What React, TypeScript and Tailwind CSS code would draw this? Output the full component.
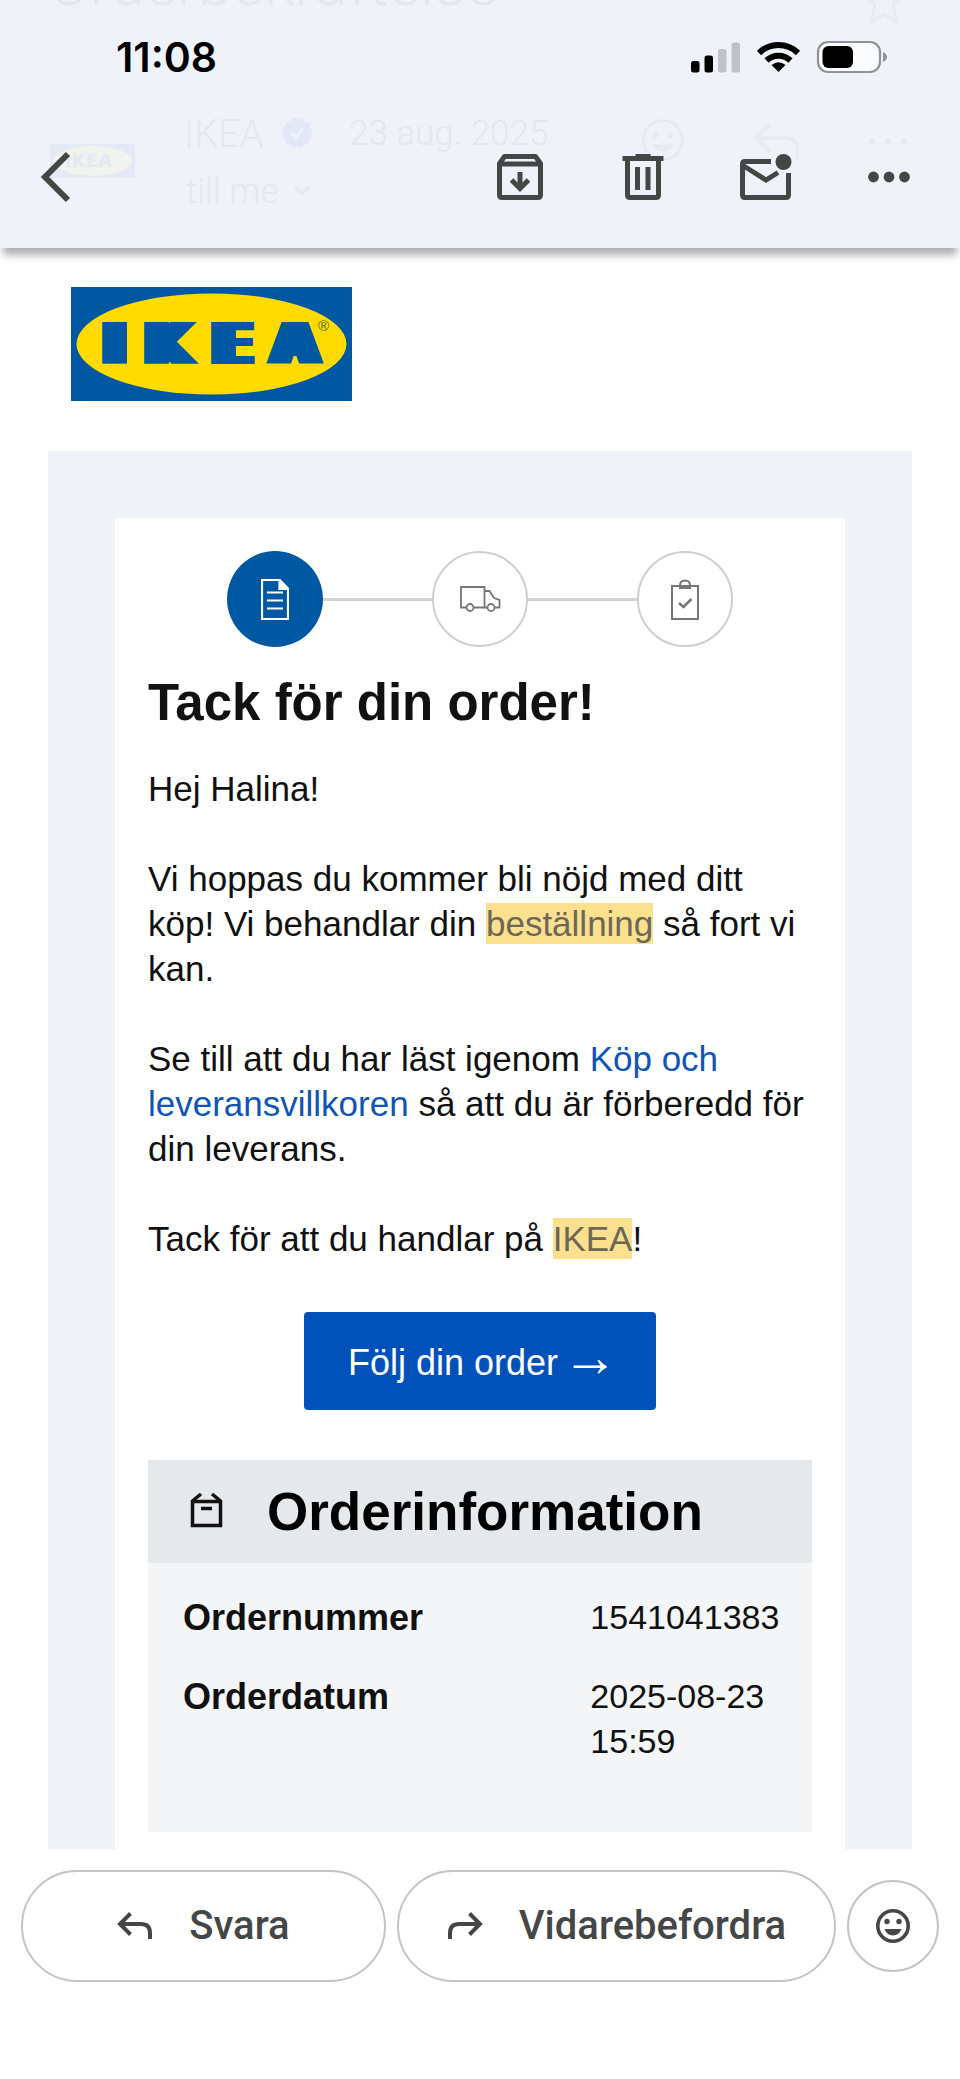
import React from "react";

function StatusIcons() {
  return (
    <svg width="196" height="34" viewBox="0 0 196 34" aria-hidden="true">
      <rect x="0" y="21" width="8.5" height="11.5" rx="2.5" fill="#000" />
      <rect x="13.5" y="15.5" width="8.5" height="17" rx="2.5" fill="#000" />
      <rect x="27" y="9" width="8.5" height="23.5" rx="2.5" fill="#bfc3c9" />
      <rect x="40.5" y="2.5" width="8.5" height="30" rx="2.5" fill="#bfc3c9" />
      <g fill="none" stroke="#000" strokeWidth="6">
        <path d="M68 13 A28 28 0 0 1 107 13" />
        <path d="M75.500 20.500 A17.500 17.500 0 0 1 99.500 20.500" />
      </g>
      <path d="M87.500 32 L80.500 25 Q87.500 19.500 94.500 25 Z" fill="#000" />
      <rect x="127" y="2" width="62" height="30" rx="10" fill="#fbfcfe" stroke="#8f9296" strokeWidth="2.2" />
      <rect x="131.500" y="6" width="30.500" height="22" rx="6" fill="#000" />
      <path d="M192 12 Q196 14 196 17 Q196 20 192 22 Z" fill="#8f9296" />
    </svg>
  );
}

function BackIcon() {
  return (
    <svg width="50" height="52" viewBox="0 0 50 52" fill="none" stroke="#444746" strokeWidth="6" aria-hidden="true">
      <path d="M38 3 L15 26 L38 49" />
    </svg>
  );
}

function ArchiveIcon() {
  return (
    <svg width="46" height="46" viewBox="0 0 46 46" fill="none" aria-hidden="true">
      <path d="M2.500 9.500 L7.500 2.500 H38.500 L43.500 9.500 V41 Q43.500 43.500 41 43.500 H5 Q2.500 43.500 2.500 41 Z" stroke="#444746" strokeWidth="5" strokeLinejoin="round" />
      <path d="M3 10 H43" stroke="#444746" strokeWidth="5" />
      <path d="M23 18 V34 M14.500 26 L23 34.500 L31.500 26" stroke="#444746" strokeWidth="5" />
    </svg>
  );
}

function TrashIcon() {
  return (
    <svg width="42" height="46" viewBox="0 0 42 46" fill="none" stroke="#444746" strokeWidth="5" aria-hidden="true">
      <path d="M0.500 4.500 H41.500" />
      <path d="M13.500 2.500 H28.500" />
      <path d="M5.500 5 V41 Q5.500 43.500 8 43.500 H34 Q36.500 43.500 36.500 41 V5" />
      <path d="M15.500 13 V36 M26 13 V36" />
    </svg>
  );
}

function UnreadIcon() {
  return (
    <svg width="52" height="48" viewBox="0 0 52 48" fill="none" stroke="#444746" strokeWidth="5" aria-hidden="true">
      <path d="M31 8.500 H5 Q2.500 8.500 2.500 11 V42 Q2.500 44.500 5 44.500 H46 Q48.500 44.500 48.500 42 V20" />
      <path d="M3 12.500 L26 27 L38 19.500" />
      <circle cx="43.500" cy="9" r="8" fill="#444746" stroke="none" />
    </svg>
  );
}

function MoreIcon() {
  return (
    <svg width="42" height="12" viewBox="0 0 42 12" fill="#444746" aria-hidden="true">
      <circle cx="5.500" cy="6" r="5.400" />
      <circle cx="21" cy="6" r="5.400" />
      <circle cx="36.500" cy="6" r="5.400" />
    </svg>
  );
}

function FadedSubject() {
  return (
    <div aria-hidden="true" className="pointer-events-none absolute inset-0 overflow-hidden font-[Roboto,sans-serif] font-light whitespace-nowrap text-[#e4e8ee]">
      <span className="absolute -top-12 left-12 text-[62px] leading-[64px]">Orderbekräftelse</span>
      <span className="absolute -top-9 left-[536px] text-[30px] leading-[40px]">Inkorg</span>
      <svg className="absolute top-0 left-[864px]" width="40" height="26" viewBox="0 0 40 26" fill="none" stroke="#e8ebf1" strokeWidth="3">
        <path d="M2 -6 L11 5 L7 22 L20 14 L33 22 L29 5 L38 -6" />
      </svg>
      <svg className="absolute top-[144px] left-[50px]" width="85" height="34" viewBox="0 0 85 34">
        <rect width="85" height="34" fill="#e3eaf5" />
        <ellipse cx="42.500" cy="17" rx="40" ry="15" fill="#f1f3ee" />
        <text x="15" y="23" fontFamily="DejaVu Sans" fontWeight="700" fontSize="18" fill="#e3eaf3">IKEA</text>
      </svg>
      <span className="absolute top-[114px] left-[184px] text-[38px] leading-[40px]">IKEA</span>
      <svg className="absolute top-[117px] left-[281px]" width="32" height="32" viewBox="0 0 32 32">
        <circle cx="16" cy="16" r="13" fill="#e2e8f8" stroke="#e2e8f8" strokeWidth="4" strokeDasharray="5 2" />
        <path d="M10 16 L14.500 20.500 L22 12" fill="none" stroke="#eff3f9" strokeWidth="3" />
      </svg>
      <span className="absolute top-[114px] left-[349px] text-[35px] leading-[40px]">23 aug. 2025</span>
      <span className="absolute top-[172px] left-[186px] text-[35px] leading-[40px]">till me</span>
      <svg className="absolute top-[184px] left-[293px]" width="18" height="14" viewBox="0 0 18 14" fill="none" stroke="#e5e9ef" strokeWidth="3">
        <path d="M2 3 L9 10 L16 3" />
      </svg>
      <svg className="absolute top-[118px] left-[641px]" width="44" height="44" viewBox="0 0 44 44" fill="none" stroke="#e7eaf0" strokeWidth="3">
        <circle cx="22" cy="22" r="19.500" />
        <circle cx="14.500" cy="17" r="1.500" />
        <circle cx="29.500" cy="17" r="1.500" />
        <path d="M14 28 H30 Q22 36 14 28 Z" />
      </svg>
      <svg className="absolute top-[122px] left-[752px]" width="48" height="40" viewBox="0 0 48 40" fill="none" stroke="#e8ebf1" strokeWidth="4">
        <path d="M18 3 L4 16 L18 29 M4 16 H34 Q45 16 45 28 V38" />
      </svg>
      <svg className="absolute top-[137px] left-[867px]" width="42" height="8" viewBox="0 0 42 8" fill="#e7eaf0">
        <circle cx="5" cy="4" r="3" />
        <circle cx="21" cy="4" r="3" />
        <circle cx="37" cy="4" r="3" />
      </svg>
    </div>
  );
}

function IkeaLogo() {
  return (
    <svg className="block" width="281" height="114" viewBox="0 0 281 114" role="img" aria-label="IKEA">
      <defs>
        <filter id="wordmark" x="-10%" y="-10%" width="120%" height="120%">
          <feMorphology operator="dilate" radius="7 0" />
        </filter>
      </defs>
      <rect width="281" height="114" fill="#0058a3" />
      <ellipse cx="140.500" cy="57" rx="135" ry="50.500" fill="#ffdb00" />
      <text x="33 75 142 202" y="77" fontFamily="DejaVu Sans" fontWeight="700" fontSize="57" fill="#0058a3" filter="url(#wordmark)">
        IKEA
      </text>
      <text x="247" y="44" fontFamily="Liberation Sans" fontSize="15" fill="#3f6a3c">®</text>
    </svg>
  );
}

function DocumentIcon() {
  return (
    <svg width="28" height="41" viewBox="0 0 28 41" fill="none" stroke="#fff" strokeWidth="2.200" aria-hidden="true">
      <path d="M1 1 H18.500 L27 9.500 V40 H1 Z" />
      <path d="M18.500 1 V10 H27 Z" fill="#fff" />
      <path d="M6 13.500 H22 M6 21.500 H22 M6 29.500 H22" />
    </svg>
  );
}

function TruckIcon() {
  return (
    <svg width="41" height="26" viewBox="0 0 41 26" fill="none" stroke="#767676" strokeWidth="1.800" aria-hidden="true">
      <path d="M6.500 21.500 H1 V1 H24.500 V21.500 H13.500" />
      <path d="M24.500 5 H29.500 L34 12 L39.500 14 V21.500 H35 M28 21.500 H24.500" />
      <circle cx="10" cy="21.500" r="3.500" />
      <circle cx="31" cy="21.500" r="3.500" />
    </svg>
  );
}

function ClipboardIcon() {
  return (
    <svg width="28" height="41" viewBox="0 0 28 41" fill="none" stroke="#767676" strokeWidth="2" aria-hidden="true">
      <path d="M1 7 H27 V40 H1 Z" />
      <path d="M9 9 V6.500 Q9 1.500 14 1.500 Q19 1.500 19 6.500 V9 Z" />
      <path d="M8 24 L12.500 28 L20.500 20" strokeWidth="2.500" />
    </svg>
  );
}

function BoxIcon() {
  return (
    <svg width="33" height="38" viewBox="0 0 33 38" fill="none" stroke="#111" strokeWidth="3.500" aria-hidden="true">
      <path d="M11 1 L2.500 8 V32.500 H30.500 V8 L22 1" />
      <path d="M2.500 8.500 H30.500" />
      <path d="M11 15.500 H22" />
    </svg>
  );
}

function ReplyIcon() {
  return (
    <svg width="36" height="28" viewBox="0 0 36 28" fill="none" stroke="#444746" strokeWidth="4" aria-hidden="true">
      <path d="M13.500 1.500 L3 12 L13.500 22.500 M3 12 H24 Q33 12 33 21 V27" />
    </svg>
  );
}

function ForwardIcon() {
  return (
    <svg width="36" height="28" viewBox="0 0 36 28" fill="none" stroke="#444746" strokeWidth="4" aria-hidden="true">
      <path d="M22.500 1.500 L33 12 L22.500 22.500 M33 12 H12 Q3 12 3 21 V27" />
    </svg>
  );
}

function SmileIcon() {
  return (
    <svg width="36" height="36" viewBox="0 0 36 36" aria-hidden="true">
      <circle cx="18" cy="18" r="15.200" fill="none" stroke="#444746" strokeWidth="3.600" />
      <circle cx="12" cy="13.500" r="2.700" fill="#444746" />
      <circle cx="24" cy="13.500" r="2.700" fill="#444746" />
      <path d="M9.500 21 H26.500 Q24 27.500 18 27.500 Q12 27.500 9.500 21 Z" fill="#444746" />
    </svg>
  );
}

const tools = [
  { label: "Arkivera", Icon: ArchiveIcon },
  { label: "Ta bort", Icon: TrashIcon },
  { label: "Markera som oläst", Icon: UnreadIcon },
  { label: "Mer", Icon: MoreIcon },
];

export default function App() {
  return (
    <div className="bg-white font-['Liberation_Sans',Arial,sans-serif] text-[#111]">
      <header className="relative z-10 bg-[#eff3f9] pb-2 shadow-[0_10px_8px_-3px_rgba(0,0,0,0.32)]">
        <FadedSubject />
        <div className="relative flex h-[114px] items-center justify-between pr-[73px] pl-[116px]">
          <span className="font-[Inter,sans-serif] text-[41px] leading-[48px] font-semibold text-black">11:08</span>
          <StatusIcons />
        </div>
        <div className="relative flex h-[126px] items-center justify-between pr-[10px] pl-[30px]">
          <button type="button" aria-label="Tillbaka">
            <BackIcon />
          </button>
          <div className="flex">
            {tools.map(({ label, Icon }) => (
              <button key={label} type="button" aria-label={label} className="flex h-16 w-[123px] items-center justify-center">
                <Icon />
              </button>
            ))}
          </div>
        </div>
      </header>

      <main>
        <div className="px-[71px] pt-[39px] pb-[50px]">
          <IkeaLogo />
        </div>

        <div className="mx-12 bg-[#eff3f7] px-[67px] pt-[67px]">
          <article className="bg-white px-[33px] pt-[33px] pb-[17px]">
            <div className="flex items-center px-[79px]">
              <div className="flex size-24 items-center justify-center rounded-full bg-[#0058a3]">
                <DocumentIcon />
              </div>
              <div className="h-[3px] flex-1 bg-[#d2d2d2]" />
              <div className="flex size-24 items-center justify-center rounded-full border-2 border-[#cfcfcf]">
                <TruckIcon />
              </div>
              <div className="h-[3px] flex-1 bg-[#d2d2d2]" />
              <div className="flex size-24 items-center justify-center rounded-full border-2 border-[#cfcfcf]">
                <ClipboardIcon />
              </div>
            </div>

            <h1 className="mt-[26px] text-[51px] leading-[60px] font-bold">Tack för din order!</h1>

            <div className="mt-[33px] flex flex-col gap-[45px] text-[35px] leading-[45px]">
              <p>Hej Halina!</p>
              <p>
                Vi hoppas du kommer bli nöjd med ditt köp! Vi behandlar din{" "}
                <mark className="bg-[#fbe08e] py-px text-[#6b675a]">beställning</mark> så fort vi kan.
              </p>
              <p>
                Se till att du har läst igenom{" "}
                <a href="#villkor" className="text-[#0f55b5]">
                  Köp och leveransvillkoren
                </a>{" "}
                så att du är förberedd för din leverans.
              </p>
              <p>
                Tack för att du handlar på <mark className="bg-[#fbe08e] py-px text-[#6b675a]">IKEA</mark>!
              </p>
            </div>

            <div className="mt-[51px] flex justify-center">
              <a href="#order" className="flex h-[98px] items-center gap-1 rounded bg-[#0051ba] pt-1 pr-[38px] pl-[44px] text-[36px] leading-[48px] text-white">
                Följ din order <span className="mb-3 text-[56px]">→</span>
              </a>
            </div>

            <section className="mt-[50px] bg-[#f3f5f7]">
              <div className="flex h-[103px] items-center gap-[44px] bg-[#e6e9ec] pl-[42px]">
                <BoxIcon />
                <h2 className="text-[53px] leading-[60px] font-bold text-black">Orderinformation</h2>
              </div>
              <div className="pt-8 pr-[30px] pb-[34px] pl-[35px]">
                <table className="w-full table-fixed text-left leading-[45px]">
                  <tbody>
                    <tr>
                      <th scope="row" className="w-[68%] pb-[34px] align-top text-[36px] font-bold">Ordernummer</th>
                      <td className="pb-[34px] align-top text-[34px]">1541041383</td>
                    </tr>
                    <tr>
                      <th scope="row" className="pb-[34px] align-top text-[36px] font-bold">Orderdatum</th>
                      <td className="pb-[34px] align-top text-[34px]">2025-08-23 15:59</td>
                    </tr>
                  </tbody>
                </table>
              </div>
            </section>
          </article>
        </div>
      </main>

      <footer className="flex items-center gap-[11px] px-[21px] pt-[21px] pb-[97px] font-[Roboto,sans-serif] text-[40px] leading-[48px] font-medium text-[#444746]">
        <button type="button" className="flex h-28 flex-[365] items-center justify-center gap-[36px] rounded-full border-2 border-[#c4c4c4]">
          <ReplyIcon />
          Svara
        </button>
        <button type="button" className="flex h-28 flex-[440] items-center justify-center gap-[36px] rounded-full border-2 border-[#c4c4c4]">
          <ForwardIcon />
          Vidarebefordra
        </button>
        <button type="button" aria-label="Lägg till reaktion" className="flex size-[92px] shrink-0 items-center justify-center rounded-full border-2 border-[#c4c4c4]">
          <SmileIcon />
        </button>
      </footer>
    </div>
  );
}
